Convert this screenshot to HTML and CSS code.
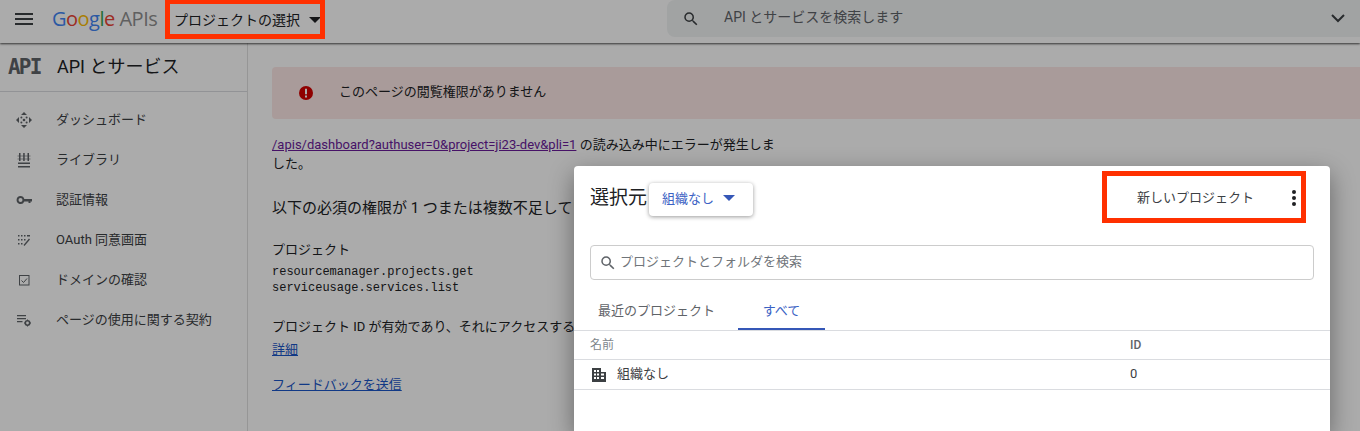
FILE: index.html
```html
<!DOCTYPE html>
<html lang="ja">
<head>
<meta charset="utf-8">
<title>API とサービス</title>
<link rel="stylesheet" href="styles.css">
</head>
<body>
<header class="topbar">
  <svg class="menu-icon" viewBox="0 0 18 12"><path d="M0 0h18v2H0zM0 5h18v2H0zM0 10h18v2H0z"/></svg>
  <div class="logo"><span class="g-blue">G</span><span class="g-red">o</span><span class="g-yellow">o</span><span class="g-blue">g</span><span class="g-green">l</span><span class="g-red">e</span> <span class="logo-apis">APIs</span></div>
  <div class="project-select"><span>プロジェクトの選択</span><i class="caret"></i></div>
  <div class="search">
    <svg class="search-icon" viewBox="0 0 24 24"><path d="M15.5 14h-.79l-.28-.27A6.471 6.471 0 0 0 16 9.5 6.5 6.5 0 1 0 9.5 16c1.61 0 3.09-.59 4.23-1.57l.27.28v.79l5 4.99L20.49 19l-4.99-5zm-6 0C7.01 14 5 11.99 5 9.5S7.01 5 9.5 5 14 7.01 14 9.5 11.99 14 9.5 14z"/></svg>
    <span class="search-text">API とサービスを検索します</span>
    <svg class="chev" viewBox="0 0 14 9"><path d="M1 1l6 6 6-6" fill="none" stroke="currentColor" stroke-width="2"/></svg>
  </div>
</header>
<div class="body">
  <aside class="sidebar">
    <div class="side-title"><span class="api-mark">API</span><span class="side-name">API とサービス</span></div>
    <nav class="nav">
      <div class="nav-item"><svg class="nav-icon" viewBox="0 0 16 16"><path d="M8 0l3 3H5zM8 16l-3-3h6zM0 8l3-3v6zM16 8l-3 3V5z"/><circle cx="8" cy="8" r="1.3"/><circle cx="5.4" cy="5.4" r="1"/><circle cx="10.6" cy="5.4" r="1"/><circle cx="5.4" cy="10.6" r="1"/><circle cx="10.6" cy="10.6" r="1"/></svg><span>ダッシュボード</span></div>
      <div class="nav-item"><svg class="nav-icon" viewBox="0 0 16 16"><path d="M3 1h1.500v8H3zM7.200 1h1.500v8H7.200zM11.500 1H13v8h-1.500zM2 10.500h12V12H2zM2 14h12v1.500H2z"/><path d="M1.500 3.500h13v1h-13zM1.500 6.500h13v1h-13z" opacity=".6"/></svg><span>ライブラリ</span></div>
      <div class="nav-item"><svg class="nav-icon" viewBox="0 0 16 16"><path fill-rule="evenodd" d="M4.500 4a4 4 0 0 1 3.800 3H16v2.500h-1.500V11h-2V9.500H8.300A4 4 0 1 1 4.500 4zm0 2a2 2 0 1 0 0 4 2 2 0 0 0 0-4z"/></svg><span>認証情報</span></div>
      <div class="nav-item"><svg class="nav-icon" viewBox="0 0 16 16"><path d="M2 3h1.500v1.500H2zM5 3h1.500v1.500H5zM8 3h1.500v1.500H8zM11 3h3v1.500h-3zM2 7h1.500v1.500H2zM5 7h1.500v1.500H5zM8 7h1.500v1.500H8zM2 11h1.500v1.500H2zM5 11h1.500v1.500H5z"/><path d="M8 13.500l5.500-6.500" fill="none" stroke="currentColor" stroke-width="1.300"/></svg><span>OAuth 同意画面</span></div>
      <div class="nav-item"><svg class="nav-icon" viewBox="0 0 16 16"><path fill-rule="evenodd" d="M3 3h10.500v10.500H3zm1 1v8.500h8.500V4z"/><path d="M5.500 8.500l2 2 3.500-4" fill="none" stroke="currentColor"/></svg><span>ドメインの確認</span></div>
      <div class="nav-item"><svg class="nav-icon" viewBox="0 0 16 16"><path d="M1 3h9v1.300H1zM1 6h9v1.300H1zM1 9h5.500v1.300H1z"/><circle cx="11.500" cy="11" r="2.200" fill="none" stroke="currentColor" stroke-width="1.600"/><path d="M11 7.500h1v1.500h-1zM11 13h1v1.500h-1zM8 10.500h1.500v1H8zM13.500 10.500H15v1h-1.500z"/></svg><span>ページの使用に関する契約</span></div>
    </nav>
  </aside>
  <main class="content">
    <div class="alert">
      <svg class="alert-icon" viewBox="0 0 14 14"><circle cx="7" cy="7" r="7"/><path d="M6 2.800h2v5.400H6zM6 9.400h2v2H6z" fill="#fff"/></svg>
      <span class="alert-text">このページの閲覧権限がありません</span>
    </div>
    <p class="err"><a class="visited" href="#">/apis/dashboard?authuser=0&amp;project=ji23-dev&amp;pli=1</a> の読み込み中にエラーが発生しました。</p>
    <h2 class="perm">以下の必須の権限が 1 つまたは複数不足しています</h2>
    <p class="perm-label">プロジェクト</p>
    <p class="mono">resourcemanager.projects.get<br>serviceusage.services.list</p>
    <p class="note">プロジェクト ID が有効であり、それにアクセスする権限があることを確認してください</p>
    <p class="detail"><a href="#">詳細</a></p>
    <p class="feedback"><a href="#">フィードバックを送信</a></p>
  </main>
</div>
<div class="scrim"></div>
<div class="frame frame-top"></div>
<section class="modal">
  <div class="modal-head">
    <div class="modal-title">選択元</div>
    <button class="org-btn"><span class="org-label">組織なし</span><i class="caret caret-blue"></i></button>
    <div class="head-actions">
      <span class="new-project">新しいプロジェクト</span>
      <svg class="more" viewBox="0 0 4 16"><circle cx="2" cy="2" r="2"/><circle cx="2" cy="8" r="2"/><circle cx="2" cy="14" r="2"/></svg>
    </div>
  </div>
  <div class="modal-search">
    <svg class="search-icon-sm" viewBox="0 0 24 24"><path d="M15.5 14h-.79l-.28-.27A6.471 6.471 0 0 0 16 9.5 6.5 6.5 0 1 0 9.5 16c1.61 0 3.09-.59 4.23-1.57l.27.28v.79l5 4.99L20.49 19l-4.99-5zm-6 0C7.01 14 5 11.99 5 9.5S7.01 5 9.5 5 14 7.01 14 9.5 11.99 14 9.5 14z"/></svg>
    <span class="modal-search-text">プロジェクトとフォルダを検索</span>
  </div>
  <div class="tabs">
    <div class="tab">最近のプロジェクト</div>
    <div class="tab tab-active">すべて</div>
  </div>
  <div class="row row-head"><span class="col-name">名前</span><span class="col-id">ID</span></div>
  <div class="row row-body">
    <span class="col-name org"><svg class="org-icon" viewBox="0 0 14 14"><path fill-rule="evenodd" d="M0 0h9v4h5v10H0zM2 2v2h2V2zm3 0v2h2V2zM2 5.500v2h2v-2zm3 0v2h2v-2zm4 0v2h3v-2zM2 9v2h2V9zm3 0v2h2V9zm4 0v2h3V9z"/></svg><span class="org-name">組織なし</span></span>
    <span class="col-id">0</span>
  </div>
  <div class="frame frame-new"></div>
</section>
</body>
</html>
```
FILE: styles.css
```css
* { box-sizing: border-box; }
html, body { margin: 0; height: 431px; overflow: hidden; }
body {
  position: relative;
  background: #fff;
  color: #202124;
  font-family: Roboto, "Noto Sans CJK JP", sans-serif;
  font-size: 13px;
}
p, h2 { margin: 0; font-weight: 400; }
a { color: #1a56c8; }
a.visited { color: #6a1b9a; }

.topbar {
  height: 43px;
  display: flex;
  align-items: center;
  background: #fff;
  box-shadow: 0 1px 2px rgba(0,0,0,.7);
  position: relative;
}
.menu-icon { width: 18px; height: 12px; margin: 0 0 5px 15px; fill: #3c4043; flex: none; }
.logo {
  margin-left: 19px;
  width: 122px;
  font-family: "Open Sans", sans-serif;
  font-size: 20px;
  letter-spacing: -.5px;
  white-space: nowrap;
  margin-bottom: 6px;
  flex: none;
}
.g-blue { color: #4285f4; }
.g-red { color: #ea4335; }
.g-yellow { color: #fbbc05; }
.g-green { color: #34a853; }
.logo-apis { color: #8f8f8f; }
.project-select {
  display: flex;
  align-items: center;
  font-size: 14px;
  width: 150px;
  flex: none;
  margin-top: -3px;
  white-space: nowrap;
}
.project-select span { padding-bottom: 2px; }
.caret {
  display: block;
  width: 0;
  height: 0;
  margin-left: 9px;
  border: 6px solid transparent;
  border-top: 6px solid #202124;
  border-bottom: 0;
}
.search {
  margin-left: 343px;
  margin-top: -6px;
  flex: 1;
  height: 37px;
  border-radius: 8px 0 0 8px;
  background: #f1f3f4;
  display: flex;
  align-items: center;
  color: #5f6368;
}
.search-icon { width: 18px; height: 18px; margin-left: 15px; fill: #3c4043; flex: none; }
.search-text { margin-left: 24px; font-size: 14px; flex: 1; padding-bottom: 6px; }
.chev { width: 14px; height: 9px; margin-right: 15px; color: #3c4043; flex: none; }

.body { display: flex; height: 388px; }
.sidebar { width: 248px; flex: none; border-right: 1px solid #e0e0e0; }
.side-title {
  height: 49px;
  display: flex;
  align-items: center;
  border-bottom: 1px solid #dadce0;
}
.api-mark {
  width: 57px;
  padding-left: 8px;
  font-family: "DejaVu Sans Mono", monospace;
  font-weight: 700;
  font-size: 21px;
  letter-spacing: -1.8px;
  color: #5f6368;
  flex: none;
  padding-bottom: 1px;
}
.side-name { font-size: 18px; padding-bottom: 4px; }
.nav { padding-top: 7px; }
.nav-item { height: 40px; display: flex; align-items: center; color: #3c4043; font-size: 13px; }
.nav-item span { padding-bottom: 2px; }
.nav-icon { width: 16px; height: 16px; margin: 2px 24px 0 16px; fill: #5f6368; color: #5f6368; flex: none; }

.content { flex: 1; padding: 24px 0 0 24px; min-width: 0; }
.alert {
  width: 1100px;
  height: 52px;
  background: #fce8e6;
  border-radius: 4px;
  display: flex;
  align-items: center;
  padding-left: 27px;
  font-size: 13px;
}
.alert-icon { width: 14px; height: 14px; fill: #d50000; margin-right: 26px; flex: none; }
.alert-text { padding-bottom: 6px; }
.err { width: 503px; margin-top: 16px; line-height: 19px; font-size: 13px; }
.perm { margin-top: 25px; font-size: 15px; line-height: 20px; white-space: nowrap; }
.perm-label { margin-top: 24px; font-size: 13px; line-height: 16px; }
.mono { margin-top: 6px; font-family: "Liberation Mono", monospace; font-size: 12px; line-height: 16px; }
.note { margin-top: 22px; font-size: 13px; line-height: 18px; white-space: nowrap; }
.detail { margin-top: 5px; line-height: 18px; }
.feedback { margin-top: 17px; line-height: 18px; }

.scrim { position: absolute; inset: 0; background: rgba(0,0,0,.33); }
.frame { position: absolute; border: 5px solid #ff3000; pointer-events: none; }
.frame-top { left: 165px; top: -2px; width: 160px; height: 41px; border-top-width: 6px; }
.frame-new { left: 528px; top: 5px; width: 204px; height: 52px; }

.modal {
  position: absolute;
  left: 574px;
  top: 166px;
  width: 756px;
  height: 265px;
  background: #fff;
  border-radius: 4px 4px 0 0;
  box-shadow: 0 8px 24px rgba(0,0,0,.4);
}
.modal-head { height: 67px; display: flex; align-items: center; padding: 0 0 0 16px; }
.modal-title { font-size: 19px; line-height: 24px; width: 59px; flex: none; margin-bottom: 3px; }
.org-btn {
  width: 104px;
  height: 33px;
  margin-bottom: 1px;
  border: 0;
  border-radius: 4px;
  background: #fff;
  box-shadow: 0 1px 4px rgba(0,0,0,.4);
  display: flex;
  align-items: center;
  padding: 0 0 0 13px;
  color: #3b62c4;
  font: inherit;
  font-size: 13px;
}
.org-btn .org-label { color: #3b62c4; padding-bottom: 4px; }
.caret-blue { border-top-color: #3557b7; margin-left: 9px; margin-bottom: 2px; }
.head-actions { margin-left: auto; display: flex; align-items: center; padding-right: 34px; }
.new-project { font-size: 13px; color: #3c4043; margin-right: 38px; margin-bottom: 7px; }
.more { width: 4px; height: 16px; fill: #202124; margin-bottom: 3px; }

.modal-search {
  margin: 12px 16px 0;
  height: 35px;
  border: 1px solid #ccc;
  border-radius: 4px;
  display: flex;
  align-items: center;
  padding-left: 8px;
  color: #70757a;
  font-size: 13px;
}
.modal-search-text { padding-bottom: 4px; }
.search-icon-sm { width: 18px; height: 18px; fill: #5f6368; margin-right: 3px; flex: none; }
.tabs { margin-top: 13px; height: 37px; display: flex; padding-left: 24px; }
.tab { font-size: 13px; color: #5f6368; line-height: 36px; width: 140px; }
.tab-active {
  width: 87px;
  text-align: center;
  color: #3b62c4;
  border-bottom: 2px solid #3557b7;
}
.row {
  display: flex;
  align-items: center;
  border-top: 1px solid #dadce0;
  padding-left: 16px;
  font-size: 12px;
}
.row-head { height: 29px; color: #80868b; }
.row-head .col-name { padding-bottom: 4px; }
.row-body { height: 31px; border-bottom: 1px solid #dadce0; color: #3c4043; font-size: 13px; }
.col-name { width: 540px; flex: none; display: flex; align-items: center; }
.col-id { padding-bottom: 2px; }
.row-head .col-id { font-weight: 500; color: #5f6368; padding-bottom: 0; }
.org-name { padding-bottom: 4px; }
.org-icon { width: 14px; height: 14px; margin: 0 11px 0 2px; fill: #3c4043; }
```
